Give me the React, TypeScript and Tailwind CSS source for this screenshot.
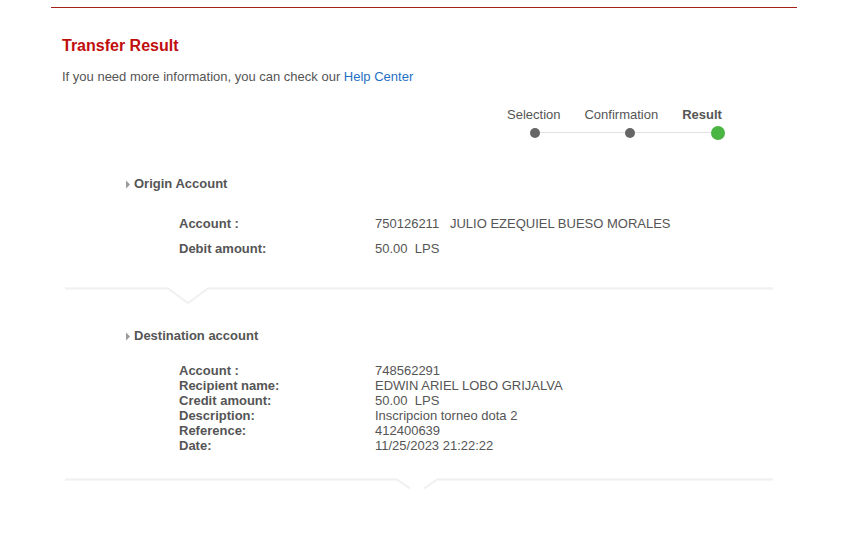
import React from "react";

function Separator({ notchX, fade }: { notchX: number; fade?: boolean }) {
  const w = 708;
  const a = notchX - 20;
  const b = notchX + 20;
  const depth = fade ? 10 : 15.5;
  const ax = fade ? notchX - 7 : notchX;
  const bx = fade ? notchX + 7 : notchX;
  const pts = (o: number) =>
    fade
      ? `0,${1 + o} ${a},${1 + o} ${ax},${depth + o}`
      : `0,${1 + o} ${a},${1 + o} ${notchX},${depth + o} ${b},${1 + o} ${w},${1 + o}`;
  const pts2 = (o: number) => `${bx},${depth + o} ${b},${1 + o} ${w},${1 + o}`;
  return (
    <svg width={w} height={20} viewBox={`0 0 ${w} 20`} className="block">
      <polyline points={pts(1)} fill="none" stroke="#f6f6f6" strokeWidth="2" />
      <polyline points={pts(0)} fill="none" stroke="#ebebeb" strokeWidth="1" />
      {fade && (
        <>
          <polyline points={pts2(1)} fill="none" stroke="#f6f6f6" strokeWidth="2" />
          <polyline points={pts2(0)} fill="none" stroke="#ebebeb" strokeWidth="1" />
        </>
      )}
    </svg>
  );
}

function Caret() {
  return (
    <svg width="6" height="9" viewBox="0 0 6 9" className="mr-[3px]">
      <path d="M1 0.5 L5 4.5 L1 8.5 Z" fill="#9a9a9a" />
    </svg>
  );
}

export default function App() {
  const font = { fontFamily: '"Liberation Sans", Arial, sans-serif' };
  return (
    <div className="w-[864px] h-[540px] bg-white text-[#555]" style={font}>
      <div className="ml-[51px] w-[746px] pt-[7px]">
        <div className="h-px bg-[#a8201a]" />
        <div className="pl-[11px] pt-[28px]">
          <h1 className="text-[16px] leading-[20px] font-bold text-[#c00d0d]">Transfer Result</h1>
          <p className="mt-[14px] text-[13px] leading-[14px] text-[#555]">
            If you need more information, you can check our{" "}
            <span className="text-[#1f6fc4]">Help Center</span>
          </p>
        </div>

        {/* stepper */}
        <div className="ml-[455px] mt-[24px] w-[230px]">
          <div className="flex text-[13px] leading-[14px] text-[#555]">
            <span className="ml-[1px]">Selection</span>
            <span className="ml-[24px]">Confirmation</span>
            <span className="ml-[24px] font-bold">Result</span>
          </div>
          <div className="relative mt-[4px] h-[14px]">
            <div className="absolute left-[29px] right-[14px] top-[6px] h-px bg-[#e2e2e2]" />
            <div className="absolute left-[24px] top-[2px] w-[10px] h-[10px] rounded-full bg-[#666]" />
            <div className="absolute left-[119px] top-[2px] w-[10px] h-[10px] rounded-full bg-[#666]" />
            <div className="absolute left-[205px] top-0 w-[14px] h-[14px] rounded-full bg-[#4bb543]" />
          </div>
        </div>

        {/* origin */}
        <div className="pl-[74px] mt-[36px]">
          <div className="flex items-center text-[13px] leading-[16px] font-bold">
            <Caret />
            <span>Origin Account</span>
          </div>
          <div className="pl-[54px] mt-[19px] text-[13px] leading-[25px]">
            <div className="flex">
              <span className="w-[196px] font-bold">Account :</span>
              <span>750126211&nbsp;&nbsp;&nbsp;JULIO EZEQUIEL BUESO MORALES</span>
            </div>
            <div className="flex">
              <span className="w-[196px] font-bold">Debit amount:</span>
              <span>50.00&nbsp;&nbsp;LPS</span>
            </div>
          </div>
        </div>

        <div className="ml-[14px] mt-[26px]">
          <Separator notchX={123} />
        </div>

        {/* destination */}
        <div className="pl-[74px] mt-[21px]">
          <div className="flex items-center text-[13px] leading-[16px] font-bold">
            <Caret />
            <span>Destination account</span>
          </div>
          <div className="pl-[54px] mt-[19px] text-[13px] leading-[15px]">
            {[
              ["Account :", "748562291"],
              ["Recipient name:", "EDWIN ARIEL LOBO GRIJALVA"],
              ["Credit amount:", "50.00\u00a0\u00a0LPS"],
              ["Description:", "Inscripcion torneo dota 2"],
              ["Reference:", "412400639"],
              ["Date:", "11/25/2023 21:22:22"],
            ].map(([k, v]) => (
              <div className="flex" key={k}>
                <span className="w-[196px] font-bold">{k}</span>
                <span>{v}</span>
              </div>
            ))}
          </div>
        </div>

        <div className="ml-[14px] mt-[25px]">
          <Separator notchX={352} fade />
        </div>
      </div>
    </div>
  );
}
